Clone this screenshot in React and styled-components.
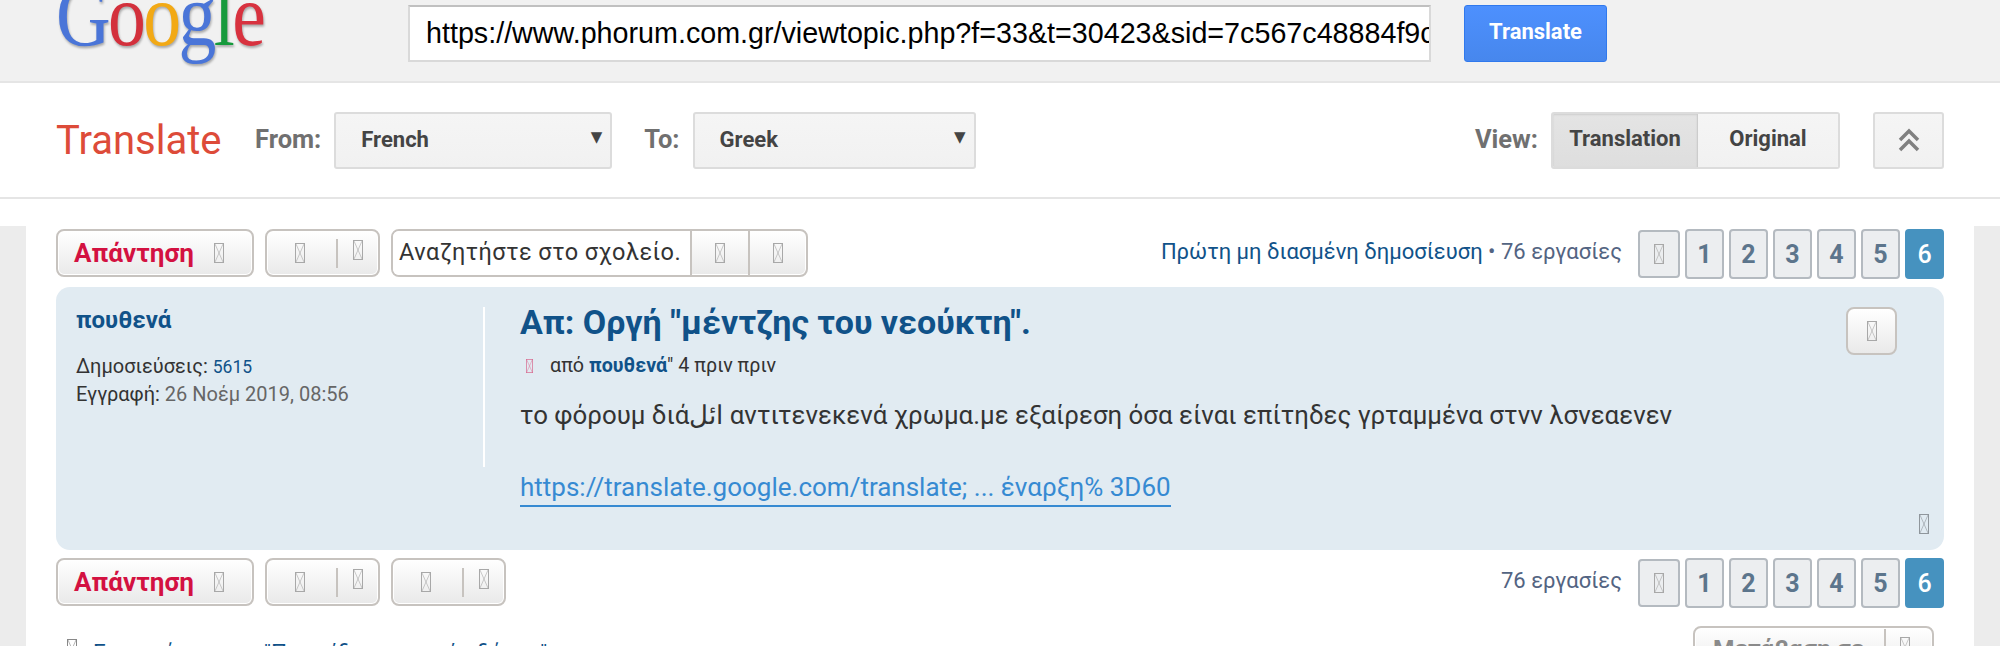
import React from "react";
import styled, { createGlobalStyle } from "styled-components";

const GlobalStyle = createGlobalStyle`
  html, body {
    margin: 0;
    padding: 0;
    background: #fff;
    height: 646px;
    overflow: hidden;
  }
  * { box-sizing: border-box; }
`;

function Tofu({ color = "#a8a8a8", raised, small }) {
  return (
    <TofuBox
      $raised={raised}
      viewBox="0 0 10 20"
      width={small ? 7 : 10}
      height={small ? 14 : 20}
      preserveAspectRatio="none"
    >
      <rect x="0.5" y="0.5" width="9" height="19" fill="none" stroke={color} />
      <path d="M1 1L9 19M9 1L1 19" fill="none" stroke={color} strokeWidth="0.6" />
    </TofuBox>
  );
}

function Pager() {
  return (
    <PagerRow>
      <PageBox $wide>
        <Tofu />
      </PageBox>
      {[1, 2, 3, 4, 5].map((n) => (
        <PageBox key={n}>{n}</PageBox>
      ))}
      <PageBox $active>6</PageBox>
    </PagerRow>
  );
}

function ToolSplit() {
  return (
    <SplitButton>
      <Tofu />
      <SplitLine />
      <Tofu raised />
    </SplitButton>
  );
}

export default function App() {
  return (
    <>
      <GlobalStyle />
      <TopBar>
        <LogoSlot>
          <Logo>
            <b style={{ color: "#4a75d8" }}>G</b>
            <b style={{ color: "#d3303c" }}>o</b>
            <b style={{ color: "#f2a915" }}>o</b>
            <b style={{ color: "#4a75d8" }}>g</b>
            <b style={{ color: "#159a3c" }}>l</b>
            <b style={{ color: "#d8323f" }}>e</b>
          </Logo>
        </LogoSlot>
        <UrlBox>https://www.phorum.com.gr/viewtopic.php?f=33&amp;t=30423&amp;sid=7c567c48884f9c</UrlBox>
        <BlueButton>Translate</BlueButton>
      </TopBar>

      <ControlBar>
        <Title>Translate</Title>
        <Label>From:</Label>
        <SelectBox $width={278}>
          French<Arrow>▼</Arrow>
        </SelectBox>
        <Label $left={32}>To:</Label>
        <SelectBox $width={283}>
          Greek<Arrow>▼</Arrow>
        </SelectBox>
        <Spacer />
        <Label>View:</Label>
        <Toggle>
          <ToggleItem $on>Translation</ToggleItem>
          <ToggleItem>Original</ToggleItem>
        </Toggle>
        <CollapseButton>
          <svg width="24" height="24" viewBox="0 0 24 24" fill="none" stroke="#808080" strokeWidth="3.5">
            <path d="M3 12L12 3L21 12M3 22L12 13L21 22" />
          </svg>
        </CollapseButton>
      </ControlBar>

      <Page>
        <Paper>
          <ActionBar>
            <ButtonGroup>
              <ReplyButton>
                Απάντηση <Tofu />
              </ReplyButton>
              <ToolSplit />
              <SearchBox>
                <SearchText>Αναζητήστε στο σχολείο.</SearchText>
                <SearchCell>
                  <Tofu />
                </SearchCell>
                <SearchCell>
                  <Tofu />
                </SearchCell>
              </SearchBox>
            </ButtonGroup>
            <PagerInfo>
              <a>Πρώτη μη διασμένη δημοσίευση</a> • 76 εργασίες
            </PagerInfo>
            <Pager />
          </ActionBar>

          <Post>
            <Profile>
              <Author>πουθενά</Author>
              <ProfileLine>
                Δημοσιεύσεις: <a>5615</a>
              </ProfileLine>
              <ProfileLine>
                Εγγραφή: <span>26 Νοέμ 2019, 08:56</span>
              </ProfileLine>
            </Profile>
            <PostBody>
              <PostTitle>Απ: Οργή "μέντζης του νεούκτη".</PostTitle>
              <PostMeta>
                <Tofu color="#d8688f" small />
                <span>
                  από <strong>πουθενά</strong>" 4 πριν πριν
                </span>
              </PostMeta>
              <PostText>
                το φόρουμ διάائل αντιτενεκενά χρωμα.με εξαίρεση όσα είναι επίτηδες γρταμμένα στνν λσνεαενεν
              </PostText>
              <PostLink>https://translate.google.com/translate; ... έναρξη% 3D60</PostLink>
            </PostBody>
            <ReportButton>
              <Tofu />
            </ReportButton>
            <CornerIcon>
              <Tofu color="#8f969c" />
            </CornerIcon>
          </Post>

          <ActionBar $bottom>
            <ButtonGroup>
              <ReplyButton>
                Απάντηση <Tofu />
              </ReplyButton>
              <ToolSplit />
              <ToolSplit />
            </ButtonGroup>
            <PagerInfo>76 εργασίες</PagerInfo>
            <Pager />
          </ActionBar>

          <FooterRow>
            <BackLink>
              <Tofu color="#888" />
              <a>Επιστρέψτε στο "Παιχνίδια μουσικής δάσος"</a>
            </BackLink>
            <JumpButton>
              <JumpText>Μετάβαση σε</JumpText>
              <SplitLine />
              <Tofu raised />
            </JumpButton>
          </FooterRow>
        </Paper>
      </Page>
    </>
  );
}

const TofuBox = styled.svg`
  flex: none;
  display: block;
  margin-top: ${(p) => (p.$raised ? "-7px" : "0")};
`;

const TopBar = styled.header`
  height: 83px;
  background: #f1f1f1;
  border-bottom: 2px solid #e5e5e5;
  display: flex;
  align-items: flex-start;
  padding-left: 56px;
  overflow: hidden;
`;

const LogoSlot = styled.div`
  flex: none;
  width: 352px;
`;

const Logo = styled.div`
  margin-top: -34px;
  font-family: "Liberation Serif", serif;
  font-size: 88px;
  line-height: 100px;
  letter-spacing: -3px;
  white-space: nowrap;
  transform: scaleX(0.86);
  transform-origin: left top;
  filter: blur(0.7px) drop-shadow(1px 2px 1px rgba(0, 0, 0, 0.3));

  b {
    font-weight: 400;
  }
`;

const UrlBox = styled.div`
  flex: none;
  width: 1023px;
  height: 57px;
  margin-top: 5px;
  padding-left: 16px;
  background: #fff;
  border: 2px solid #d9d9d9;
  border-top-color: #c0c0c0;
  font-family: "Liberation Sans", sans-serif;
  font-size: 28.7px;
  line-height: 52px;
  color: #000;
  white-space: nowrap;
  overflow: hidden;
`;

const BlueButton = styled.div`
  width: 143px;
  height: 57px;
  margin: 5px 0 0 33px;
  border: 1px solid #3079ed;
  border-radius: 3px;
  background: linear-gradient(#4d90fe, #4787ed);
  font-family: Roboto, sans-serif;
  font-weight: 700;
  font-size: 22px;
  line-height: 52px;
  color: #fff;
  text-align: center;
`;

const ControlBar = styled.div`
  height: 116px;
  display: flex;
  align-items: center;
  padding: 0 56px;
  background: #fff;
  border-bottom: 2px solid #e5e5e5;
`;

const Title = styled.div`
  width: 199px;
  font-family: Roboto, sans-serif;
  font-size: 40px;
  color: #dd4b39;
`;

const Label = styled.div`
  margin-left: ${(p) => p.$left || 0}px;
  margin-right: 13px;
  padding-bottom: 2px;
  font-family: Roboto, sans-serif;
  font-weight: 700;
  font-size: 25.5px;
  color: #707070;
`;

const SelectBox = styled.div`
  position: relative;
  width: ${(p) => p.$width}px;
  height: 57px;
  padding-left: 25px;
  background: linear-gradient(#f5f5f5, #f1f1f1);
  border: 2px solid #dcdcdc;
  border-radius: 3px;
  font-family: Roboto, sans-serif;
  font-weight: 700;
  font-size: 22px;
  line-height: 51px;
  color: #444;
`;

const Arrow = styled.span`
  position: absolute;
  right: 8px;
  top: -2px;
  font-family: "DejaVu Sans", sans-serif;
  font-size: 15px;
  color: #444;
`;

const Spacer = styled.div`
  flex: 1;
`;

const Toggle = styled.div`
  display: flex;
  width: 289px;
  height: 57px;
  border: 2px solid #dcdcdc;
  border-radius: 3px;
  overflow: hidden;
`;

const ToggleItem = styled.div`
  width: ${(p) => (p.$on ? "147px" : "142px")};
  background: ${(p) => (p.$on ? "linear-gradient(#e4e4e4, #dedede)" : "linear-gradient(#f5f5f5, #f1f1f1)")};
  box-shadow: ${(p) => (p.$on ? "inset 0 1px 2px rgba(0, 0, 0, 0.1)" : "none")};
  border-right: ${(p) => (p.$on ? "1px solid #ccc" : "0")};
  font-family: Roboto, sans-serif;
  font-weight: 700;
  font-size: 22px;
  line-height: 49px;
  color: #444;
  text-align: center;
`;

const CollapseButton = styled.div`
  width: 71px;
  height: 57px;
  margin-left: 33px;
  display: flex;
  align-items: center;
  justify-content: center;
  background: linear-gradient(#f5f5f5, #f1f1f1);
  border: 2px solid #dcdcdc;
  border-radius: 3px;
`;

const Page = styled.div`
  height: 447px;
  padding: 0 26px;
  background: linear-gradient(#fff 27px, #ececec 27px);
`;

const Paper = styled.div`
  height: 100%;
  background: #fff;
  padding: 30px 30px 0;
  overflow: hidden;
`;

const ActionBar = styled.div`
  display: flex;
  align-items: flex-start;
  margin-top: ${(p) => (p.$bottom ? "8px" : "0")};
`;

const ButtonGroup = styled.div`
  display: flex;
  gap: 11px;
  flex: 1;
`;

const ActionButton = styled.div`
  height: 48px;
  display: flex;
  align-items: center;
  background: linear-gradient(#fff, #e9e9e9);
  border: 2px solid #c7c3bf;
  border-radius: 8px;
  box-shadow: inset 0 0 0 1px #fff;
`;

const ReplyButton = styled(ActionButton)`
  width: 198px;
  padding-left: 16px;
  gap: 20px;
  font-family: Roboto, sans-serif;
  font-weight: 700;
  font-size: 26px;
  color: #d31141;
  justify-content: flex-start;
`;

const SplitButton = styled(ActionButton)`
  width: 115px;
  padding-left: 28px;
`;

const SplitLine = styled.span`
  flex: none;
  width: 2px;
  height: 29px;
  margin: 0 15px 0 31px;
  background: #c7c3bf;
`;

const SearchBox = styled(ActionButton)`
  width: 417px;
  overflow: hidden;
`;

const SearchText = styled.div`
  width: 299px;
  height: 100%;
  padding-left: 6px;
  background: #fff;
  font-family: Roboto, sans-serif;
  font-size: 23.5px;
  line-height: 42px;
  letter-spacing: 0.45px;
  color: #333;
  white-space: nowrap;
  border-right: 2px solid #c7c3bf;
`;

const SearchCell = styled.div`
  flex: 1;
  height: 100%;
  display: flex;
  align-items: center;
  justify-content: center;
  & + & {
    border-left: 2px solid #c7c3bf;
  }
`;

const PagerInfo = styled.div`
  margin: 10px 16px 0 0;
  font-family: Roboto, sans-serif;
  font-size: 22px;
  color: #536482;
  white-space: nowrap;

  a {
    color: #105289;
  }
`;

const PagerRow = styled.div`
  display: flex;
  gap: 5px;
`;

const PageBox = styled.div`
  width: ${(p) => (p.$wide ? "42px" : "39px")};
  height: ${(p) => (p.$wide ? "48px" : "50px")};
  margin-top: ${(p) => (p.$wide ? "1px" : "0")};
  display: flex;
  align-items: center;
  justify-content: center;
  background: ${(p) => (p.$active ? "#4692bf" : "#eceef0")};
  border: 2px solid ${(p) => (p.$active ? "#4692bf" : "#b4bac0")};
  border-radius: 4px;
  font-family: Roboto, sans-serif;
  font-weight: ${(p) => (p.$active ? 500 : 700)};
  font-size: 25px;
  color: ${(p) => (p.$active ? "#fff" : "#5c758c")};
`;

const Post = styled.article`
  position: relative;
  display: flex;
  height: 263px;
  margin-top: 8px;
  padding-top: 20px;
  background: #e1ebf2;
  border-radius: 14px;
`;

const Profile = styled.div`
  flex: none;
  width: 429px;
  height: 160px;
  padding-left: 20px;
  border-right: 2px solid #fff;
  font-family: Roboto, sans-serif;
`;

const Author = styled.div`
  margin-bottom: 20px;
  font-weight: 700;
  font-size: 24px;
  line-height: 26px;
  color: #105289;
`;

const ProfileLine = styled.div`
  font-size: 20px;
  line-height: 27px;
  color: #333;

  a {
    font-size: 17.5px;
    color: #105289;
  }
  span {
    color: #666;
  }
`;

const PostBody = styled.div`
  padding-left: 35px;
  font-family: Roboto, sans-serif;
`;

const PostTitle = styled.h3`
  margin: -5px 0 0;
  font-weight: 700;
  font-size: 34px;
  line-height: 40px;
  color: #105289;
`;

const PostMeta = styled.div`
  display: flex;
  align-items: center;
  gap: 17px;
  margin: 12px 0 0 6px;
  font-size: 19.7px;
  line-height: 24px;
  color: #333;

  strong {
    color: #105289;
  }
`;

const PostText = styled.p`
  margin: 21px 0 0;
  font-size: 25.85px;
  line-height: 32px;
  color: #333;
  white-space: nowrap;
`;

const PostLink = styled.a`
  display: table;
  margin-top: 39px;
  border-bottom: 2px solid #368ad2;
  font-size: 26px;
  line-height: 35px;
  color: #368ad2;
`;

const ReportButton = styled.div`
  position: absolute;
  top: 20px;
  right: 47px;
  width: 51px;
  height: 48px;
  display: flex;
  align-items: center;
  justify-content: center;
  background: linear-gradient(#fff, #e9e9e9);
  border: 2px solid #c7c3bf;
  border-radius: 8px;
`;

const CornerIcon = styled.div`
  position: absolute;
  right: 15px;
  bottom: 16px;
`;

const FooterRow = styled.div`
  display: flex;
  justify-content: space-between;
  align-items: flex-start;
  padding: 18px 10px 0 11px;
`;

const BackLink = styled.div`
  display: flex;
  gap: 16px;
  margin-top: 13px;
  font-family: Roboto, sans-serif;
  font-size: 22.5px;
  line-height: 26px;
  color: #105289;
`;

const JumpButton = styled(ActionButton)`
  width: 241px;
  padding-left: 18px;

  ${SplitLine} {
    margin: -14px 14px 0 19px;
  }
`;

const JumpText = styled.span`
  margin-top: -4px;
  font-family: Roboto, sans-serif;
  font-weight: 700;
  font-size: 24.5px;
  white-space: nowrap;
  color: #8a8a8a;
`;
